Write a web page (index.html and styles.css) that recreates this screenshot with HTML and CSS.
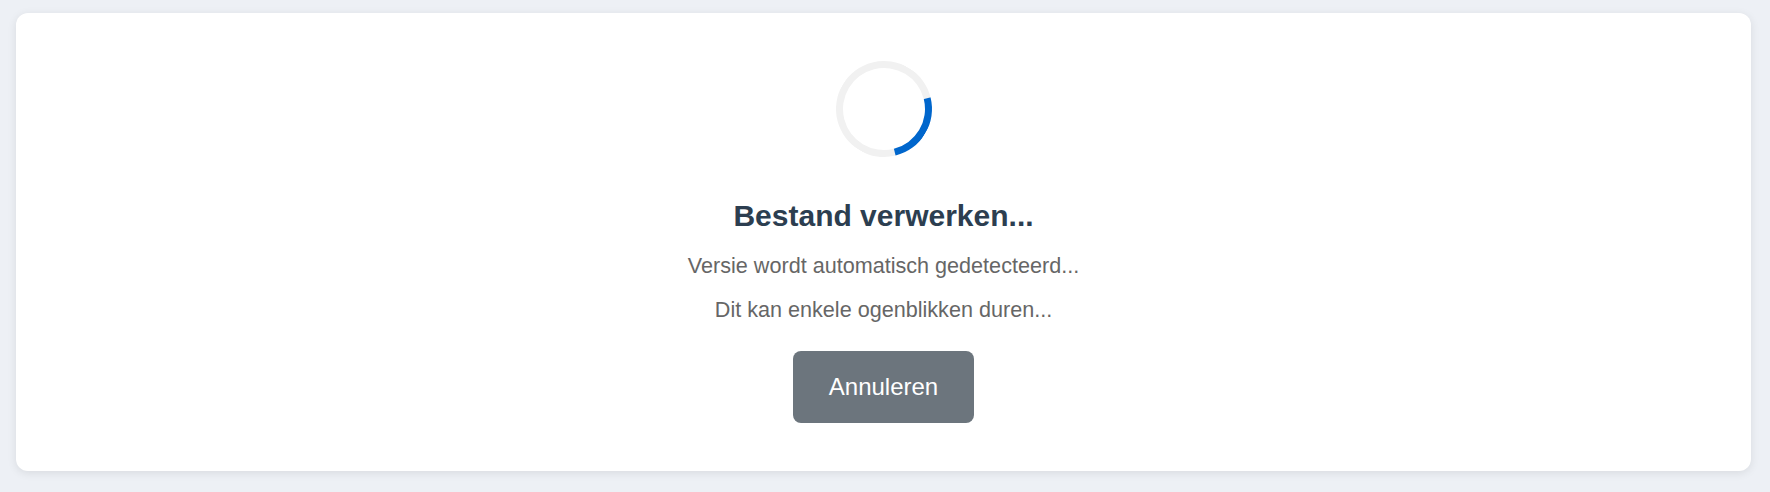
FILE: index.html
```html
<!DOCTYPE html>
<html lang="nl">
<head>
<meta charset="utf-8">
<title>Bestand verwerken</title>
<link rel="stylesheet" href="styles.css">
</head>
<body>
  <main class="card">
    <div class="spinner" aria-hidden="true"></div>
    <h2 class="title">Bestand verwerken...</h2>
    <p class="status">Versie wordt automatisch gedetecteerd...</p>
    <p class="status">Dit kan enkele ogenblikken duren...</p>
    <button class="btn-cancel" type="button">Annuleren</button>
  </main>
</body>
</html>
```
FILE: styles.css
```css
html, body {
  margin: 0;
  padding: 0;
}

body {
  background: #edf0f5;
  font-family: "Liberation Sans", Arial, sans-serif;
  padding: 13px 19px 21px 16px;
}

.card {
  background: #ffffff;
  border-radius: 12px;
  box-shadow: 0 2px 10px rgba(0, 0, 0, 0.09);
  padding: 48px 20px 48px;
  display: flex;
  flex-direction: column;
  align-items: center;
  text-align: center;
  box-sizing: border-box;
  height: 458px;
}

.spinner {
  width: 96px;
  height: 96px;
  box-sizing: border-box;
  border: 7px solid #f1f1f1;
  border-right-color: #0066cc;
  border-radius: 50%;
  transform: rotate(31deg);
  margin-bottom: 42px;
}

.title {
  margin: 0 0 21px;
  font-size: 30px;
  font-weight: 700;
  line-height: 33px;
  color: #2c3e50;
}

.status {
  margin: 0 0 19px;
  font-size: 21.6px;
  line-height: 25px;
  color: #666666;
}

.status + .status {
  margin-bottom: 29px;
}

.btn-cancel {
  font-family: "Liberation Sans", Arial, sans-serif;
  font-size: 24px;
  line-height: 26px;
  color: #ffffff;
  background: #6c757d;
  border: none;
  border-radius: 8px;
  padding: 23px 36px;
  cursor: pointer;
}
```
